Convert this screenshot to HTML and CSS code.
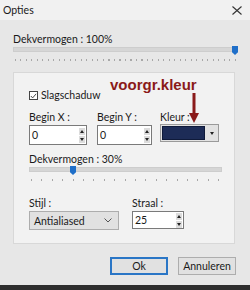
FILE: index.html
```html
<!DOCTYPE html>
<html>
<head>
<meta charset="utf-8">
<link rel="stylesheet" href="styles.css">
</head>
<body>
<div class="dialog">
  <div class="titlebar">
    <span class="title">Opties</span>
    <svg class="close" width="10" height="9" viewBox="0 0 10 9"><path d="M0.5 0.5L9.5 8.5M9.5 0.5L0.5 8.5" stroke="#333" stroke-width="1.1" fill="none"/></svg>
  </div>
  <div class="content">
    <div class="label top-label">Dekvermogen : 100%</div>
    <div class="slider slider-top">
      <div class="track"></div>
      <div class="thumb" style="left: 219px"></div>
      <div class="ticks"></div>
    </div>
    <div class="group">
      <div class="annot">voorgr.kleur</div>
      <svg class="arrow" width="12" height="31" viewBox="0 0 12 31"><path d="M6 0V22" stroke="#8a1a1a" stroke-width="3"/><path d="M1 20H11L6 30Z" fill="#8a1a1a"/></svg>
      <div class="check-row">
        <span class="checkbox"><svg width="8" height="8" viewBox="0 0 8 8"><path d="M1 4L3 6.2L7 1.5" stroke="#333" stroke-width="1" fill="none"/></svg></span>
        <span class="check-text">Slagschaduw</span>
      </div>
      <div class="fields">
        <div class="field fx">
          <div class="label">Begin X :</div>
          <div class="spin"><span class="val">0</span><span class="spinbtns"><i class="up"></i><i class="down"></i></span></div>
        </div>
        <div class="field fy">
          <div class="label">Begin Y :</div>
          <div class="spin"><span class="val">0</span><span class="spinbtns"><i class="up"></i><i class="down"></i></span></div>
        </div>
        <div class="field fc">
          <div class="label">Kleur :</div>
          <div class="colorpick"><span class="swatch"></span><span class="cdrop"><i class="down"></i></span></div>
        </div>
      </div>
      <div class="label mid-label">Dekvermogen : 30%</div>
      <div class="slider slider-mid">
        <div class="track"></div>
        <div class="thumb" style="left: 41px"></div>
        <div class="ticks"></div>
      </div>
      <div class="fields bottom-fields">
        <div class="field fs">
          <div class="label">Stijl :</div>
          <div class="select"><span class="val">Antialiased</span><svg width="8" height="5" viewBox="0 0 8 5"><path d="M0.5 0.5L4 4L7.5 0.5" stroke="#555" fill="none"/></svg></div>
        </div>
        <div class="field fr">
          <div class="label">Straal :</div>
          <div class="spin"><span class="val">25</span><span class="spinbtns"><i class="up"></i><i class="down"></i></span></div>
        </div>
      </div>
    </div>
    <div class="buttons">
      <button class="btn ok">Ok</button>
      <button class="btn">Annuleren</button>
    </div>
  </div>
  <div class="frame-bottom"></div>
</div>
</body>
</html>
```

FILE: styles.css
```css
* { box-sizing: border-box; }
html, body { margin: 0; padding: 0; }
body {
  width: 250px;
  height: 290px;
  overflow: hidden;
  font-family: Lato, "Open Sans", sans-serif;
  font-size: 10.5px;
  color: #1a1a1a;
}
.dialog {
  width: 250px;
  height: 290px;
  display: flex;
  flex-direction: column;
  background: #e7e7e7;
}
.titlebar {
  height: 20px;
  flex: none;
  background: #f1f1f1;
  display: flex;
  align-items: center;
  justify-content: space-between;
  padding: 0 8px 0 3px;
}
.title { font-size: 10.5px; line-height: 12px; }
.close { display: block; margin-top: 1px; }
.content {
  flex: 1;
  padding: 0 15px 0 13px;
  display: flex;
  flex-direction: column;
}
.label { line-height: 13px; height: 13px; white-space: nowrap; }
.top-label { margin-top: 13px; }
.slider { position: relative; height: 17px; }
.slider .track {
  position: absolute;
  left: 0;
  top: 1px;
  height: 5px;
  background: #d6d6d6;
  border: 1px solid #cdcdcd;
}
.slider .thumb {
  position: absolute;
  top: 0;
  width: 6px;
  height: 9px;
  background: #1f6fc9;
  clip-path: polygon(0 0, 100% 0, 100% 70%, 50% 100%, 0 70%);
}
.slider .ticks {
  position: absolute;
  top: 13px;
  height: 2px;
  left: 2px;
  background: repeating-linear-gradient(to right, #a8a8a8 0 1px, transparent 1px 5.5px);
}
.slider-top { width: 224px; }
.slider-top .track { width: 222px; }
.slider-top .ticks { width: 222px; }
.group {
  position: relative;
  margin-top: 9px;
  height: 172px;
  background: #f2f2f2;
  border: 1px solid #d8d8d8;
  padding: 17px 0 0 15px;
}
.annot {
  position: absolute;
  left: 96px;
  top: 3px;
  font-family: "Liberation Sans", Arial, sans-serif;
  font-weight: bold;
  font-size: 15px;
  line-height: 17px;
  color: #8a1a1a;
}
.arrow { position: absolute; left: 174px; top: 20px; }
.check-row { display: flex; align-items: center; height: 11px; }
.checkbox {
  width: 9px;
  height: 9px;
  border: 1px solid #444;
  background: #fff;
  display: flex;
  align-items: center;
  justify-content: center;
  margin-right: 3px;
}
.checkbox svg { display: block; }
.check-text { line-height: 11px; }
.fields { display: flex; margin-top: 10px; }
.field { display: flex; flex-direction: column; }
.field .label { margin-bottom: 1px; }
.fx { width: 58px; margin-right: 10px; }
.fy { width: 55px; margin-right: 8px; }
.fc { width: 59px; }
.spin {
  height: 20px;
  background: #fff;
  border: 1px solid #7a7a7a;
  display: flex;
  align-items: center;
  justify-content: space-between;
  padding: 0 1px 0 2px;
}
.spin .val { line-height: 14px; }
.spinbtns {
  display: flex;
  flex-direction: column;
  gap: 1px;
  width: 6px;
}
.spinbtns i {
  display: block;
  height: 7px;
  background: #dcdcdc;
  position: relative;
}
.spinbtns i::after {
  content: "";
  position: absolute;
  left: 1px;
  border-left: 2px solid transparent;
  border-right: 2px solid transparent;
}
.spinbtns .up::after { top: 2px; border-bottom: 3px solid #222; }
.spinbtns .down::after { top: 2px; border-top: 3px solid #222; }
.colorpick {
  height: 18px;
  margin-top: -1px;
  border: 1px solid #9a9a9a;
  background: #e2e2e2;
  display: flex;
  padding: 1px;
}
.swatch { width: 43px; background: #1d2c57; border: 1px solid #0f1a3a; }
.cdrop { flex: 1; position: relative; }
.cdrop .down::after {
  content: "";
  position: absolute;
  left: 5px;
  top: 6px;
  border-left: 2px solid transparent;
  border-right: 2px solid transparent;
  border-top: 3px solid #222;
}
.mid-label { margin-top: 8px; }
.slider-mid { width: 194px; margin-top: 0; }
.slider-mid .track { width: 193px; height: 5px; }
.slider-mid .ticks {
  width: 193px;
  background: repeating-linear-gradient(to right, #a8a8a8 0 1px, transparent 1px 10.4px);
}
.bottom-fields { margin-top: 14px; }
.fs { width: 90px; margin-right: 13px; }
.fr { width: 52px; }
.select {
  height: 19px;
  background: #e1e1e1;
  border: 1px solid #adadad;
  display: flex;
  align-items: center;
  justify-content: space-between;
  padding: 0 6px 0 4px;
}
.fr .spin { height: 18px; }
.buttons {
  display: flex;
  justify-content: flex-end;
  gap: 10px;
  margin-top: 13px;
  margin-right: -1px;
}
.btn {
  width: 58px;
  height: 18px;
  padding: 0;
  font-family: inherit;
  font-size: 10.5px;
  color: #1a1a1a;
  background: #e1e1e1;
  border: 1px solid #adadad;
  line-height: 14px;
}
.btn.ok { border: 2px solid #2a76c6; }
.frame-bottom {
  margin-top: auto;
  height: 5px;
  background: #2e2e2e;
  flex: none;
}
```
